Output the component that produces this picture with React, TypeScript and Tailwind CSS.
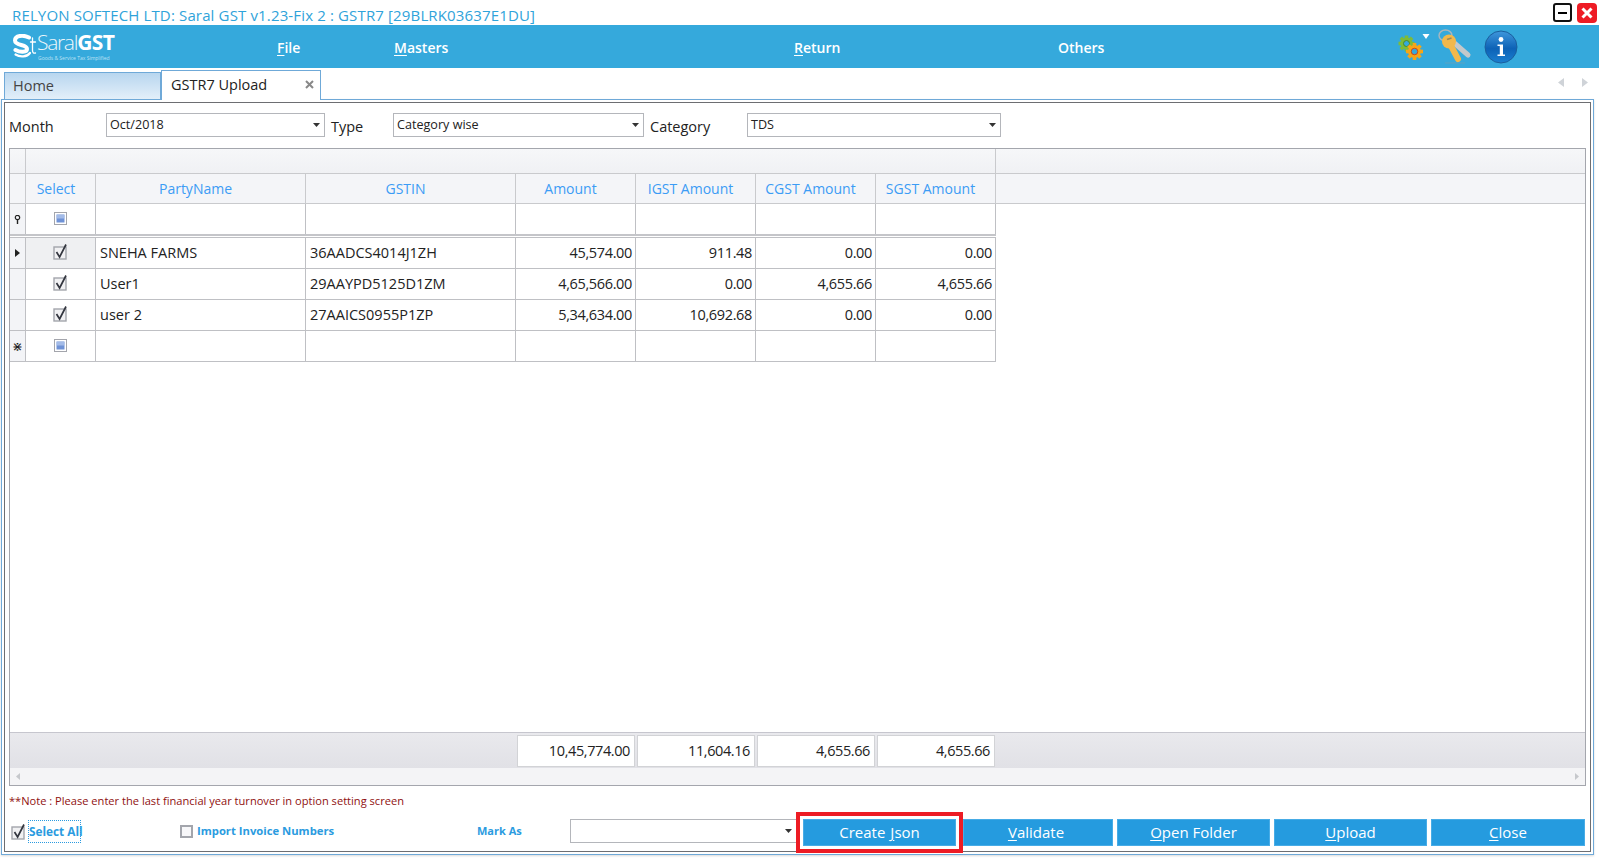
import React from 'react';

const cols = ['w-[70px]', 'w-[210px]', 'w-[210px]', 'w-[120px]', 'w-[120px]', 'w-[120px]', 'w-[120px]'];
const heads = ['Select', 'PartyName', 'GSTIN', 'Amount', 'IGST Amount', 'CGST Amount', 'SGST Amount'];
const rows = [
  ['SNEHA FARMS', '36AADCS4014J1ZH', '45,574.00', '911.48', '0.00', '0.00'],
  ['User1', '29AAYPD5125D1ZM', '4,65,566.00', '0.00', '4,655.66', '4,655.66'],
  ['user 2', '27AAICS0955P1ZP', '5,34,634.00', '10,692.68', '0.00', '0.00'],
];
const totals = ['10,45,774.00', '11,604.16', '4,655.66', '4,655.66'];

function Check({ className = '' }: { className?: string }) {
  return (
    <svg width="16" height="17" viewBox="0 0 16 17" className={`shrink-0 ${className}`}>
      <rect x="1" y="4" width="12" height="12" fill="#f1f1f3" stroke="#a3a5ac" strokeWidth="1.4" />
      <path d="M3.5 9 L6.6 14 L13 1.5" fill="none" stroke="#33363f" strokeWidth="1.7" />
    </svg>
  );
}

function Indeterminate() {
  return (
    <svg width="13" height="13" viewBox="0 0 13 13">
      <rect x="0.5" y="0.5" width="12" height="12" fill="#fff" stroke="#a3a5ac" />
      <rect x="2.5" y="2.5" width="8" height="8" fill="#6f92d6" />
      <rect x="3" y="3" width="7" height="3.5" fill="#a3bbe8" />
    </svg>
  );
}

function Combo({ value, className }: { value: string; className: string }) {
  return (
    <div className={`flex h-[24px] items-center justify-between border border-[#b4b6bb] bg-white pl-[3px] pr-[4px] text-[12.6px] text-[#222] ${className}`}>
      <span>{value}</span>
      <svg width="7" height="4" viewBox="0 0 7 4"><path d="M0 0h7L3.5 4z" fill="#333" /></svg>
    </div>
  );
}

function Btn({ children, className = '' }: { children: React.ReactNode; className?: string }) {
  return (
    <button className={`flex h-[27px] items-center justify-center border border-[#48ace6] bg-[#259bdf] text-[15px] text-white ${className}`}>
      {children}
    </button>
  );
}

function Logo() {
  return (
    <div className="ml-[12px] flex w-[252px] shrink-0 items-start self-start">
      <svg width="25" height="24" viewBox="0 0 25 24" className="mt-[9px] shrink-0">
        <path d="M17 3.5 C11 0.5 3 1.5 3 6.5 C3 12 15 10 15 15 C15 18.5 8 18.5 3.5 16" fill="none" stroke="#fff" strokeWidth="4" strokeLinecap="round" />
        <path d="M3.5 20.5 C8 23.5 15 23 18 19" fill="none" stroke="#fff" strokeWidth="2.2" strokeLinecap="round" />
        <path d="M20.5 4 V16.5 C20.5 18.5 21.5 19.5 23.5 19 M18.5 8 H23.5" fill="none" stroke="#fff" strokeWidth="1.3" strokeLinecap="round" />
      </svg>
      <div className="mt-[7px] flex flex-col">
        <div className="flex items-baseline text-[21px] leading-[20px] text-white">
          <span className="font-light tracking-[-1.3px] opacity-90">Saral</span>
          <span className="font-bold tracking-[-0.6px]">GST</span>
        </div>
        <span className="mt-[3px] whitespace-nowrap pl-[1px] text-[5px] leading-[6px] text-[#bfe2f4]">Goods &amp; Service Tax Simplified</span>
      </div>
    </div>
  );
}

function Gears() {
  const teeth = [0, 45, 90, 135];
  const gear = (cx: number, cy: number, r: number, fill: string, stroke: string) => (
    <g>
      {teeth.map((a) => (
        <rect key={a} x={cx - 1.8} y={cy - r - 2} width="3.6" height={2 * r + 4} fill={fill} transform={`rotate(${a} ${cx} ${cy})`} />
      ))}
      <circle cx={cx} cy={cy} r={r} fill={fill} />
      <circle cx={cx} cy={cy} r={r * 0.5} fill="#35a9dc" stroke={stroke} strokeWidth="1" />
    </g>
  );
  return (
    <svg width="34" height="28" viewBox="0 0 34 28" className="shrink-0">
      {gear(8.5, 10.5, 6, '#7dbb3a', '#4f8a1e')}
      {gear(16.5, 18.5, 6.5, '#f7a516', '#d8430e')}
      <path d="M24.5 1h7l-3.5 5z" fill="#fff" />
    </svg>
  );
}

function KeyIcon() {
  return (
    <svg width="36" height="36" viewBox="0 0 36 36" className="shrink-0">
      <ellipse cx="7.5" cy="6.5" rx="6.5" ry="5.5" fill="none" stroke="#a9b6bd" strokeWidth="1.4" />
      <path d="M14 12 L30 26" stroke="#c4c8ca" strokeWidth="5" strokeLinecap="round" />
      <circle cx="11" cy="12.5" r="7" fill="#f2b84b" />
      <path d="M11 13 L20 30" stroke="#f2b84b" strokeWidth="6" strokeLinecap="round" />
      <path d="M9 10.5 L13.5 9" stroke="#9a8a5a" strokeWidth="1.6" />
      <path d="M7 34 H27" stroke="#7da0ad" strokeWidth="0.8" opacity="0.7" />
    </svg>
  );
}

function InfoIcon() {
  return (
    <svg width="34" height="34" viewBox="0 0 34 34" className="shrink-0">
      <defs>
        <linearGradient id="inf" x1="0" y1="0" x2="0" y2="1">
          <stop offset="0" stopColor="#3f97dc" />
          <stop offset="0.55" stopColor="#0d62b6" />
          <stop offset="1" stopColor="#1a7fd0" />
        </linearGradient>
      </defs>
      <circle cx="17" cy="17" r="16" fill="url(#inf)" stroke="#1a5f9e" strokeWidth="1" />
      <circle cx="17" cy="9.5" r="2.4" fill="#fff" />
      <path d="M13.5 14.5 H19 V24.5 H21 V26 H13.5 V24.5 H15.8 V16 H13.5 Z" fill="#fff" />
    </svg>
  );
}

function GridRow({ head, children, h }: { head: React.ReactNode; children: React.ReactNode; h: string }) {
  return (
    <div className={`flex ${h}`}>
      <div className="flex w-[16px] shrink-0 items-center justify-center border-r border-[#bfc0c4] bg-[#f3f4f7] text-[#222]">{head}</div>
      {children}
    </div>
  );
}

function U({ children }: { children: React.ReactNode }) {
  return <span className="underline underline-offset-2">{children}</span>;
}

export default function App() {
  const cell = 'flex shrink-0 items-center border-r border-[#bfc0c4]';
  return (
    <div className="flex h-[859px] w-[1599px] flex-col overflow-hidden bg-white font-['Open_Sans',sans-serif] text-[14.5px] text-[#222]">
      {/* title bar */}
      <div className="flex h-[25px] shrink-0 items-center justify-between">
        <span className="ml-[12px] mt-[5px] text-[15px] tracking-[0.145px] text-[#2fa3da]">RELYON SOFTECH LTD: Saral GST v1.23-Fix 2 : GSTR7 [29BLRK03637E1DU]</span>
        <div className="mr-[2px] flex items-center gap-[5px]">
          <div className="flex h-[19px] w-[19px] items-center justify-center rounded-[3px] border-[2px] border-[#111] bg-white">
            <div className="h-[2px] w-[9px] bg-black" />
          </div>
          <div className="flex h-[20px] w-[20px] items-center justify-center rounded-[4px] bg-[#ee1c25]">
            <svg width="12" height="12" viewBox="0 0 12 12"><path d="M1.5 1.5 L10.5 10.5 M10.5 1.5 L1.5 10.5" stroke="#fff" strokeWidth="3" /></svg>
          </div>
        </div>
      </div>
      {/* menu bar */}
      <div className="flex h-[43px] shrink-0 items-center bg-[#35a9dc] text-white">
        <Logo />
        <div className="ml-[13px] mt-[1px] w-[117px] text-[14px] font-semibold"><U>F</U>ile</div>
        <div className="mt-[1px] w-[400px] text-[14px] font-semibold"><U>M</U>asters</div>
        <div className="mt-[1px] w-[264px] text-[14px] font-semibold"><U>R</U>eturn</div>
        <div className="mt-[1px] w-[300px] text-[14px] font-semibold">Others</div>
        <div className="flex items-center pl-[40px]">
          <Gears />
          <div className="ml-[6px]"><KeyIcon /></div>
          <div className="ml-[10px]"><InfoIcon /></div>
        </div>
      </div>
      {/* tabs */}
      <div className="relative z-10 flex h-[31px] shrink-0 items-end">
        <div className="-mb-px ml-[4px] flex h-[28px] w-[157px] items-center border border-[#6fa9d8] bg-gradient-to-b from-[#b8d6ef] to-[#e3eff9] pl-[8px] text-[#444]">Home</div>
        <div className="-mb-px flex h-[30px] w-[160px] items-center justify-between border border-b-0 border-[#6fa9d8] bg-white pb-[2px] pl-[9px] pr-[6px] text-[#222]">
          <span className="font-medium">GSTR7 Upload</span>
          <svg width="9" height="9" viewBox="0 0 9 9"><path d="M1 1 L8 8 M8 1 L1 8" stroke="#888" strokeWidth="2" /></svg>
        </div>
        <div className="mb-[12px] ml-auto mr-[11px] flex gap-[18px]">
          <svg width="6" height="9" viewBox="0 0 6 9"><path d="M6 0v9L0 4.5z" fill="#cfd3d8" /></svg>
          <svg width="6" height="9" viewBox="0 0 6 9"><path d="M0 0v9l6-4.5z" fill="#cfd3d8" /></svg>
        </div>
      </div>
      {/* outer frame */}
      <div className="ml-[1px] flex h-[756px] w-[1593px] shrink-0 flex-col border border-[#6fa9d8] p-[2px] shadow-[0_1px_2px_rgba(0,0,0,0.15)]">
        <div className="flex h-full flex-col border border-[#6d6e72] px-[4px]">
          {/* filter row */}
          <div className="mt-[10px] flex h-[24px] shrink-0 items-center">
            <span className="mt-[3px] w-[97px]">Month</span>
            <Combo value="Oct/2018" className="w-[219px]" />
            <span className="ml-[6px] mt-[3px] w-[62px]">Type</span>
            <Combo value="Category wise" className="w-[251px]" />
            <span className="ml-[6px] mt-[3px] w-[97px]">Category</span>
            <Combo value="TDS" className="w-[254px]" />
          </div>
          {/* grid */}
          <div className="mt-[11px] flex h-[638px] shrink-0 flex-col border border-[#a4a6ad]">
            <div className="flex h-[25px] shrink-0 border-b border-[#c9cacd] bg-gradient-to-b from-[#f6f7f9] to-[#f0f1f4]">
              <div className="w-[16px] border-r border-[#c9cacd]" />
              <div className="w-[970px] border-r border-[#c9cacd]" />
            </div>
            <div className="flex h-[30px] shrink-0 border-b border-[#c9cacd] bg-[#f4f5f8] text-[14px] text-[#3c9cf5]">
              <div className="w-[16px] shrink-0 border-r border-[#c9cacd]" />
              {heads.map((t, i) => (
                <div key={t} className={`${cols[i]} flex shrink-0 items-center justify-center border-r border-[#c9cacd]`}>
                  <span className={i === 0 ? 'mr-[9px]' : 'mr-[10px]'}>{t}</span>
                </div>
              ))}
            </div>
            <div className="flex-1 overflow-hidden bg-white">
              <div className="w-[986px]">
                <GridRow
                  h="h-[32px] border-b-2 border-[#c4c5c9]"
                  head={
                    <svg width="7" height="9" viewBox="0 0 7 9"><circle cx="3.5" cy="2.5" r="2.2" fill="none" stroke="#222" strokeWidth="1.2" /><path d="M3.5 4v5" stroke="#222" strokeWidth="1.4" /></svg>
                  }
                >
                  <div className={`${cell} ${cols[0]} justify-center pb-[2px]`}><Indeterminate /></div>
                  {cols.slice(1).map((c, i) => <div key={i} className={`${cell} ${c}`} />)}
                </GridRow>
                <div className="h-[1px] bg-white" />
                <div className="h-[1px] bg-[#bfc0c4]" />
                {rows.map((r, idx) => (
                  <GridRow
                    key={idx}
                    h="h-[31px] border-b border-[#bfc0c4]"
                    head={idx === 0 ? <svg width="5" height="8" viewBox="0 0 5 8"><path d="M0 0v8l5-4z" fill="#222" /></svg> : null}
                  >
                    <div className={`${cell} ${cols[0]} justify-center pb-[3px] ${idx === 0 ? 'bg-[#eff0f2]' : ''}`}><Check /></div>
                    {r.map((v, j) => (
                      <div key={j} className={`${cell} ${cols[j + 1]} ${j < 2 ? 'pl-[4px]' : 'justify-end pr-[3px] tracking-[-0.35px]'}`}>{v}</div>
                    ))}
                  </GridRow>
                ))}
                <GridRow h="h-[31px] border-b border-[#bfc0c4]" head={<span className="text-[13px] leading-none">⋇</span>}>
                  <div className={`${cell} ${cols[0]} justify-center pb-[2px]`}><Indeterminate /></div>
                  {cols.slice(1).map((c, i) => <div key={i} className={`${cell} ${c}`} />)}
                </GridRow>
              </div>
            </div>
            <div className="flex h-[36px] shrink-0 items-center border-t border-[#c6c6ce] bg-gradient-to-b from-[#e9e9ed] to-[#e1e1e6] pl-[507px]">
              <div className="flex gap-[2px]">
                {totals.map((t, i) => (
                  <div key={i} className="flex h-[32px] w-[118px] items-center justify-end border border-[#d2d3d6] bg-white pr-[4px] tracking-[-0.4px]">{t}</div>
                ))}
              </div>
            </div>
            <div className="flex h-[17px] shrink-0 items-center justify-between bg-[#f4f4f6] px-[6px]">
              <svg width="4" height="7" viewBox="0 0 4 7"><path d="M4 0v7L0 3.5z" fill="#c6c8cc" /></svg>
              <svg width="4" height="7" viewBox="0 0 4 7"><path d="M0 0v7l4-3.5z" fill="#c6c8cc" /></svg>
            </div>
          </div>
          {/* note */}
          <div className="mt-[6px] h-[18px] shrink-0 whitespace-nowrap text-[11.1px] font-medium leading-[18px] text-[#8f1010]">**Note : Please enter the last financial year turnover in option setting screen</div>
          {/* actions */}
          <div className="mt-[9px] flex h-[27px] shrink-0 items-start text-[11.25px] font-bold text-[#2b9be0]">
            <div className="flex h-[25px] items-center">
              <Check className="ml-[2px]" />
              <span className="ml-[1px] flex h-[23px] w-[53px] shrink-0 items-center whitespace-nowrap border border-dotted border-[#2b9be0] text-[11.8px]">Select All</span>
              <span className="ml-[99px] h-[13px] w-[13px] shrink-0 border-[2px] border-[#a3a5ac] bg-[#f7f7f9]" />
              <span className="ml-[4px] w-[280px] shrink-0">Import Invoice Numbers</span>
              <span className="w-[93px] shrink-0 text-[11px]">Mark As</span>
            </div>
            <Combo value="" className="w-[227px] shrink-0" />
            <div className="ml-[6px] flex gap-[4px] font-normal">
              <Btn className="w-[153px] outline-4 outline-offset-[3px] outline-[#ed1c24]">Create<span className="ml-[5px]"><U>J</U>son</span></Btn>
              <Btn className="ml-[3px] w-[150px] pr-[4px]"><U>V</U>alidate</Btn>
              <Btn className="w-[153px]"><U>O</U>pen Folder</Btn>
              <Btn className="w-[153px]"><U>U</U>pload</Btn>
              <Btn className="w-[154px]"><U>C</U>lose</Btn>
            </div>
          </div>
        </div>
      </div>
    </div>
  );
}
